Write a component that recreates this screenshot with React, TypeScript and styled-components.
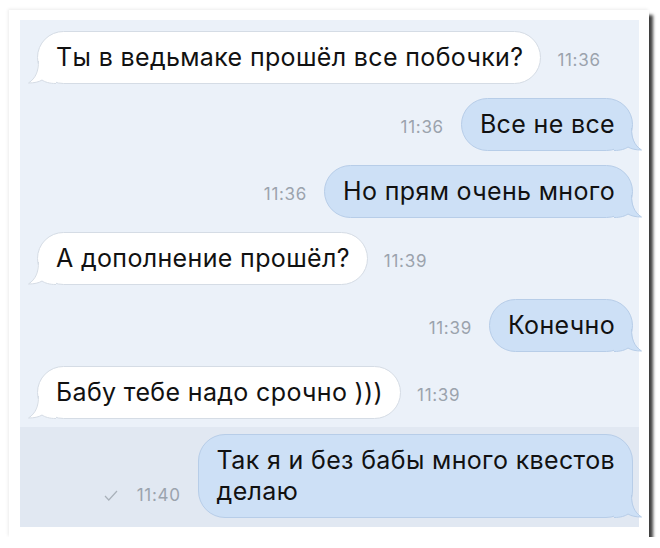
import React from "react";
import styled, { createGlobalStyle } from "styled-components";

const Global = createGlobalStyle`
  html, body { margin: 0; padding: 0; background: #ffffff; }
  body { font-family: Inter, "Liberation Sans", Arial, sans-serif; }
`;

const Card = styled.div`
  box-sizing: border-box;
  margin: 10px 0 0 9px;
  width: 640px;
  height: 527px;
  padding: 10px 10px 10px 11px;
  background: #ffffff;
  box-shadow: 4px 5px 3px rgba(0, 0, 0, 0.75), -1px -1px 3px rgba(0, 0, 0, 0.08);
  display: flex;
`;

const Chat = styled.div`
  flex: 1;
  background: #ebf1f9;
  display: flex;
  flex-direction: column;
  padding-top: 11px;
  gap: 14px;
`;

const Row = styled.div<{ $out?: boolean; $unread?: boolean }>`
  display: flex;
  align-items: flex-end;
  flex-direction: ${(p) => (p.$out ? "row-reverse" : "row")};
  padding: ${(p) => (p.$out ? "0 6px 0 0" : "0 0 0 17px")};
  ${(p) =>
    p.$unread &&
    `
    margin-top: -6px;
    flex: 1;
    align-items: flex-start;
    background: #e1e8f2;
    padding-top: 7px;
    padding-bottom: 8px;
  `}
`;

const Bubble = styled.div<{ $out?: boolean }>`
  position: relative;
  box-sizing: border-box;
  padding: 10px 17px 10px 18px;
  border-radius: 27px;
  border: 1px solid ${(p) => (p.$out ? "#b7cde8" : "#d5dce5")};
  background: ${(p) => (p.$out ? "#cde0f6" : "#ffffff")};
  color: #111111;
  font-size: 25px;
  letter-spacing: 0.35px;
  line-height: 31px;
  white-space: nowrap;
`;

const Tail = styled.svg<{ $out?: boolean }>`
  position: absolute;
  bottom: -1px;
  width: 28px;
  height: 23px;
  ${(p) => (p.$out ? "right: -10px; transform: scaleX(-1);" : "left: -10px;")}
`;

const Meta = styled.div<{ $out?: boolean }>`
  display: flex;
  align-items: center;
  gap: 19px;
  color: #9ba3ad;
  font-size: 17px;
  letter-spacing: 0.7px;
  line-height: 20px;
  margin: ${(p) => (p.$out ? "0 17px 0 0" : "0 0 0 16px")};
  padding-bottom: 14px;
  align-self: flex-end;
`;

const Check = () => (
  <svg width="14" height="11" viewBox="0 0 14 11">
    <polyline points="1,6 4.8,10 13,1" fill="none" stroke="#a9b1ba" strokeWidth="1.2" />
  </svg>
);

const TailShape = ({ out }: { out?: boolean }) => {
  const fill = out ? "#cde0f6" : "#ffffff";
  const stroke = out ? "#b7cde8" : "#d5dce5";
  return (
    <Tail $out={out} viewBox="0 0 28 23">
      <path d="M10 0 C10 10 8 17 0.5 22 C6 22 11 21 14 19 C17 21 21 22.5 28 22.5 L28 0 Z" fill={fill} />
      <path
        d="M10.5 0 C10.5 10 8 17 0.5 22 C6 22 11 21 14 19 C17 21 21 22.5 28 22.5"
        fill="none"
        stroke={stroke}
        strokeWidth="1"
      />
    </Tail>
  );
};

type Msg = { text: React.ReactNode; time: string; out?: boolean };

const msgs: Msg[] = [
  { text: "Ты в ведьмаке прошёл все побочки?", time: "11:36" },
  { text: "Все не все", time: "11:36", out: true },
  { text: "Но прям очень много", time: "11:36", out: true },
  { text: "А дополнение прошёл?", time: "11:39" },
  { text: "Конечно", time: "11:39", out: true },
  { text: "Бабу тебе надо срочно )))", time: "11:39" },
];

export default function App() {
  return (
    <>
      <Global />
      <Card>
        <Chat>
          {msgs.map((m, i) => (
            <Row key={i} $out={m.out}>
              <Bubble $out={m.out}>
                {m.text}
                <TailShape out={m.out} />
              </Bubble>
              <Meta $out={m.out}>{m.time}</Meta>
            </Row>
          ))}
          <Row $out $unread>
            <Bubble $out>
              Так я и без бабы много квестов
              <br />
              делаю
              <TailShape out />
            </Bubble>
            <Meta $out>
              <Check />
              11:40
            </Meta>
          </Row>
        </Chat>
      </Card>
    </>
  );
}
